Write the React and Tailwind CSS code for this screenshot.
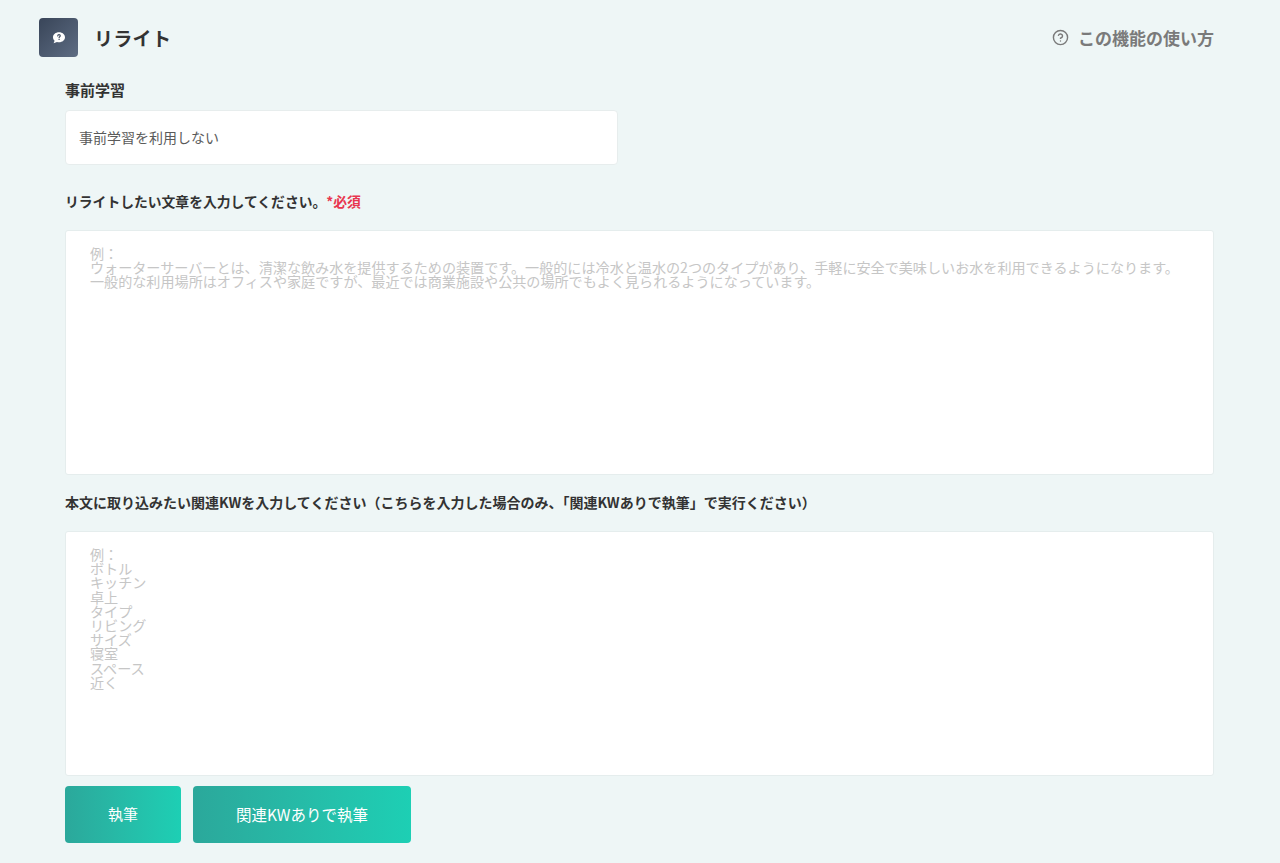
import React from "react";

const FONT = { fontFamily: '"Noto Sans CJK JP", "Noto Sans", sans-serif' };

function BubbleIcon() {
  return (
    <svg width="16" height="16" viewBox="0 0 16 16" fill="none">
      <path d="M8 2.2c3.4 0 6 2.2 6 5s-2.6 5-6 5c-.7 0-1.4-.1-2-.3L2.6 13.3l1-2.6C2.6 9.8 2 8.6 2 7.2c0-2.8 2.6-5 6-5z" fill="#ffffff" />
      <path d="M6.7 5.9c0-.8.6-1.3 1.3-1.3s1.3.5 1.3 1.2c0 .9-1.2 1-1.2 1.9" stroke="#3e4a5e" strokeWidth="1.1" strokeLinecap="round" fill="none" />
      <circle cx="8.1" cy="9.4" r="0.65" fill="#3e4a5e" />
    </svg>
  );
}

function HelpIcon() {
  return (
    <svg width="17" height="17" viewBox="0 0 24 24" fill="none" stroke="#7a7a7a" strokeWidth="2" strokeLinecap="round" strokeLinejoin="round">
      <circle cx="12" cy="12" r="10" />
      <path d="M9.09 9a3 3 0 0 1 5.83 1c0 2-3 3-3 3" />
      <path d="M12 17h.01" />
    </svg>
  );
}

const ph1 =
  "例：\nウォーターサーバーとは、清潔な飲み水を提供するための装置です。一般的には冷水と温水の2つのタイプがあり、手軽に安全で美味しいお水を利用できるようになります。\n一般的な利用場所はオフィスや家庭ですが、最近では商業施設や公共の場所でもよく見られるようになっています。";
const ph2 = "例：\nボトル\nキッチン\n卓上\nタイプ\nリビング\nサイズ\n寝室\nスペース\n近く";

export default function App() {
  return (
    <div className="min-h-[863px] w-full bg-[#eef6f6] text-[#333333]" style={FONT}>
      <div className="ml-[39px] w-[1175px] pt-[18px]">
        <div className="flex items-center justify-between">
          <div className="flex items-center gap-[16px]">
            <div className="flex h-[39px] w-[39px] items-center justify-center rounded-[4px] bg-linear-to-br from-[#394559] to-[#5e6d83]">
              <BubbleIcon />
            </div>
            <h1 className="text-[19px] font-bold leading-none tracking-[0.3px] text-[#333]">リライト</h1>
          </div>
          <div className="flex items-center gap-[9px] text-[17px] font-bold text-[#7a7a7a]">
            <HelpIcon />
            <span>この機能の使い方</span>
          </div>
        </div>

        <div className="pl-[26px]">
          <div className="mt-[22px] text-[15px] font-bold leading-[22px]">事前学習</div>
          <div className="mt-[9px] flex h-[55px] w-[553px] items-center rounded-[4px] border border-[#e7eded] bg-white px-[13px] text-[14px] text-[#5a5a5a]">
            事前学習を利用しない
          </div>

          <div className="mt-[26px] text-[13.8px] font-bold leading-[20px]">
            リライトしたい文章を入力してください。<span className="text-[#e8374f]">*必須</span>
          </div>
          <textarea
            className="mt-[19px] block h-[245px] w-full resize-none rounded-[3px] border border-[#e5eded] bg-white pl-[24px] pr-[10px] pt-[15px] text-[14.1px] leading-[14.2px] outline-none placeholder:text-[#c6c6c6]"
            placeholder={ph1}
            style={FONT}
          />

          <div className="mt-[17px] text-[14px] font-bold leading-[20px]">
            本文に取り込みたい関連KWを入力してください（こちらを入力した場合のみ、「関連KWありで執筆」で実行ください）
          </div>
          <textarea
            className="mt-[19px] block h-[245px] w-full resize-none rounded-[3px] border border-[#e5eded] bg-white pl-[24px] pr-[10px] pt-[15px] text-[14.1px] leading-[14.2px] outline-none placeholder:text-[#c6c6c6]"
            placeholder={ph2}
            style={FONT}
          />

          <div className="mt-[10px] flex gap-[12px]">
            <button className="flex h-[57px] w-[116px] items-center justify-center rounded-[4px] bg-linear-to-r from-[#2ba89b] to-[#1dcfb4] text-[15px] text-white">
              執筆
            </button>
            <button className="flex h-[57px] w-[218px] items-center justify-center rounded-[4px] bg-linear-to-r from-[#2ba89b] to-[#1dcfb4] text-[15.5px] text-white">
              関連KWありで執筆
            </button>
          </div>
        </div>
      </div>
    </div>
  );
}
